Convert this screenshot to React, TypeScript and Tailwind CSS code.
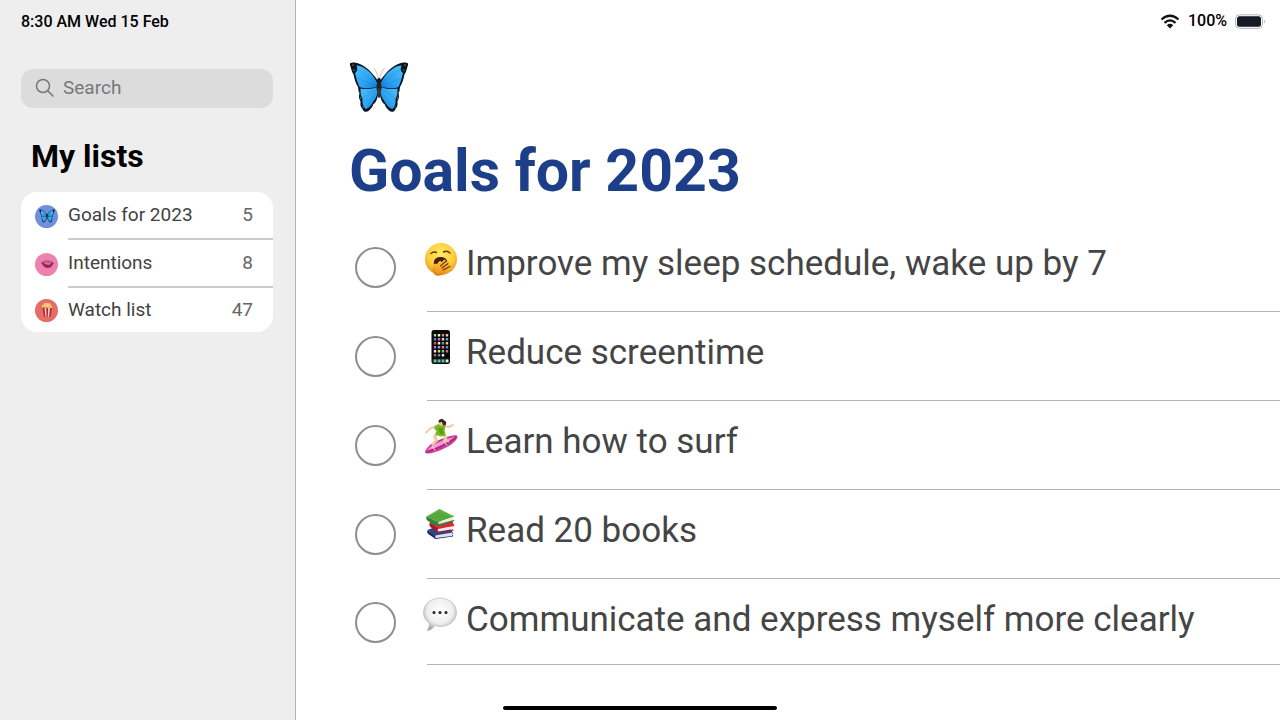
import React, { useState } from 'react';

interface Goal {
  id: string;
  text: string;
  icon: React.ReactNode;
}

interface ListItem {
  name: string;
  count: number;
  color: string;
  icon: React.ReactNode;
}

function Butterfly({ className, id }: { className: string; id: string }) {
  const wing = (
    <>
      <path
        d="M1 4C0 1.500 3.500 1 6.500 1.800C13 3 20 8 24 13.500C27 16.500 28.500 19 29.500 22L29.500 32C28.500 37 27 42 24.500 43C23.500 46.500 21 48.500 19.500 50C17.500 51.500 14.500 51 13.500 48C11 45.500 11.500 43 11.500 40C9.500 37.500 10 34 10.500 32C9 30 9.500 28 9 26C6.500 22 5.500 18 4.500 13.500C2.500 10.500 2 7 1 4Z"
        fill="#071521"
      />
      <path
        d="M7.500 4.500C14 5 20 9.500 24 15C26.500 18.500 28.500 22 29 25.500C22 27.500 15 28 10.500 26C8 20.500 7 16 6 12C8 10.500 9 9 7.500 4.500Z"
        fill={`url(#${id})`}
      />
      <path
        d="M11.500 27.500C18 29 24 27.500 29 26C29 32 27.500 37 24 41C22.500 44.500 19 47.500 16.500 48C14 45 13 42 13.500 38C11.500 35 11.500 31 11.500 27.500Z"
        fill={`url(#${id})`}
      />
      <g stroke="#075b9b" strokeWidth=".4" opacity=".4" fill="none">
        <path d="M28 24C20 17 14 11 8 9M28 25C18 22 14 19 7 17M28 27C22 31 18 34 14 37M28 28C25 35 21 40 18 45" />
      </g>
      <g fill="#d5eefb">
        <circle cx="4" cy="4" r=".6" />
        <circle cx="5" cy="9" r=".5" />
        <circle cx="14" cy="46" r=".5" />
        <circle cx="11.500" cy="37" r=".5" />
      </g>
    </>
  );
  return (
    <svg viewBox="0 0 60 52" className={className} aria-hidden="true">
      <defs>
        <linearGradient id={id} x1="0" y1="0" x2="1" y2="1">
          <stop offset="0" stopColor="#4dc0fa" />
          <stop offset=".6" stopColor="#2ca2f1" />
          <stop offset="1" stopColor="#0b7cdc" />
        </linearGradient>
      </defs>
      {wing}
      <g transform="matrix(-1 0 0 1 60 0)">{wing}</g>
      <path d="M29.500 18C28.500 13 27 10 25 7.500M30.500 18C31.500 13 33 10 35.500 7" fill="none" stroke="#b0a09c" strokeWidth=".7" />
      <ellipse cx="30" cy="20" rx="2" ry="3" fill="#17151a" />
      <ellipse cx="30" cy="26" rx="2.500" ry="6" fill="#271f22" />
      <ellipse cx="30" cy="32" rx="1.500" ry="5" fill="#49352c" />
    </svg>
  );
}

function Yawn() {
  return (
    <svg viewBox="0 0 36 36" className="size-9" aria-hidden="true">
      <defs>
        <radialGradient id="face" cx=".5" cy=".35" r=".65">
          <stop offset="0" stopColor="#ffeb64" />
          <stop offset=".65" stopColor="#fdcd38" />
          <stop offset="1" stopColor="#e79520" />
        </radialGradient>
        <linearGradient id="hand" x1="0" y1="0" x2="0" y2="1">
          <stop offset="0" stopColor="#ffcb3b" />
          <stop offset="1" stopColor="#e98718" />
        </linearGradient>
      </defs>
      <circle cx="18" cy="18" r="16" fill="url(#face)" />
      <path d="M8 12.500Q10.500 10 13.500 11.500M20.500 11Q24 9 27 12" fill="none" stroke="#603812" strokeWidth="1.500" strokeLinecap="round" />
      <path d="M11 24C10 18.500 13 16 18 16C23 16 26 20 25 27L14 29Z" fill="#45200e" />
      <path d="M9.500 27C9 23.500 11 22 14 23L16 20.500C17.500 19 18.500 20 18 21.500L21.500 18.500L23 19.500L21.500 21.500L25 20L26.500 21.500L24 24L27.500 23.500L28 25L24.500 28C23 32.500 18 35.500 13 34.500C10.500 33.500 9 30.500 9.500 27Z" fill="url(#hand)" />
      <path d="M17.500 25L22.500 20.500M19 27L25 22.500M20 29L27 25.500" fill="none" stroke="#74370d" strokeWidth="1.100" strokeLinecap="round" />
      <path d="M10.500 28C10.500 32 14 34.500 18 33.500" fill="none" stroke="#dc7518" strokeWidth="1" />
    </svg>
  );
}

const appColors = [
  ['#a3dbb1', '#f0f3f4', '#f18c55', '#f3c4cb'],
  ['#4c8ed8', '#e26abf', '#d9e4a0', '#3fb6d6'],
  ['#e2574b', '#f5ece1', '#ba63d8', '#f1ce61'],
  ['#c968dd', '#54c1e3', '#e98240', '#598de8'],
  ['#ececec', '#f2d451', '#79c9a2', '#e4599b'],
  ['#ba7849', '#7c7ee0', '#f3f3f3', '#000000'],
];

function Phone() {
  return (
    <svg viewBox="0 0 36 36" className="size-9" aria-hidden="true">
      <rect x="8.500" y="0" width="18.500" height="34" rx="2.500" fill="#090a0c" />
      {appColors.map((row, y) =>
        row.map((color, x) => (
          <rect key={`${y}-${x}`} x={10.8 + x * 4} y={4 + y * 4} width="2.400" height="2.400" rx=".5" fill={color} />
        ))
      )}
      <rect x="9.500" y="28.800" width="16.500" height="4.200" rx="1" fill="#29343a" />
      {['#55d474', '#4fc6bb', '#4ed267', '#eaf2f1'].map((color, x) => (
        <rect key={color} x={10.8 + x * 4} y="29.600" width="2.600" height="2.600" rx=".5" fill={color} />
      ))}
    </svg>
  );
}

function Surfer() {
  return (
    <svg viewBox="0 0 36 36" className="size-9" aria-hidden="true">
      <path d="M2 33.500C3 28 9 24 16 21C23 18 33 15 34.500 17C34.500 22 27 27 19 30.500C12 33.500 4 36 2 33.500Z" fill="#cf3a97" />
      <path d="M4 31.500C8 26 17 22 32 17.500C27 22 14 29 4 31.500Z" fill="#ef9fd2" />
      <path d="M3 33C13 30 25 25 33.500 18" fill="none" stroke="#a9237c" strokeWidth="1.200" />
      <path d="M9 26.500L12 31.500M20 20.500L24 26.500" stroke="#fbe3f2" strokeWidth="1" />
      <path d="M14.500 15L11.500 17.500L13.500 21.500L10 25M20 15.500L23 18L22 21L25 22" fill="none" stroke="#efc6a5" strokeWidth="2.800" strokeLinecap="round" strokeLinejoin="round" />
      <path d="M14 7L8 9L3 13.500M22 7L26 8L30 6" fill="none" stroke="#f1caab" strokeWidth="2" strokeLinecap="round" strokeLinejoin="round" />
      <path d="M12.500 6.500L17 4.500L22.500 7L21.500 12L23 16.500L18 17.500L12 15.500L13.500 12L11 9.500Z" fill="#79b91f" />
      <path d="M15 9L17 15L21 15.500L20 9" fill="#5f9c18" />
      <ellipse cx="18" cy="4" rx="2.300" ry="2.800" fill="#efc4a2" />
      <path d="M15.500 3.500C15 0 19.500 -1 21 1.500C24 2 23.500 6 22 6.500C20 7 19.500 5 19 3Z" fill="#352322" />
    </svg>
  );
}

function Books() {
  return (
    <svg viewBox="0 0 36 36" className="size-9" aria-hidden="true">
      <path d="M4.500 22L13 29L30.500 26L28 21L12 19Z" fill="#31438a" />
      <path d="M4.500 22Q3.500 25 6 26.500L12.500 31L30 28.500V27L13.500 29Z" fill="#1c2a66" />
      <path d="M12.500 27.500L29.500 24.500L29 28L13 30Q11.500 29 12.500 27.500Z" fill="#dfe2ec" />
      <path d="M7 14L14.500 21L31.500 18.500L29 12Z" fill="#d32a35" />
      <path d="M7 14Q5.500 17 7.500 19L14.500 25L31 22.500L30 21.500L15.500 23.500L14 20Z" fill="#aa182b" />
      <path d="M15 21L31 18L30.500 21L15.500 23.500Q14 22.500 15 21Z" fill="#f5edec" />
      <path d="M3.500 8.500L16.500 1L31.500 8.500L15 14Z" fill="#55a93a" />
      <path d="M3.500 8.500Q2.500 11 5 13L14.500 18.500L31.500 13L30.500 11.800L16 16Q13.500 15.500 15 14Z" fill="#2f862e" />
      <path d="M15.500 14L31 9L30.500 12L16 16Q14.500 15.500 15.500 14Z" fill="#eeeee6" />
      <path d="M5.500 8.500L16.500 2.200L29 8.500" fill="none" stroke="#70bd54" strokeWidth=".7" />
    </svg>
  );
}

function Speech() {
  return (
    <svg viewBox="0 0 36 36" className="size-9" aria-hidden="true">
      <defs>
        <radialGradient id="bubble" cx=".5" cy=".4" r=".6">
          <stop offset="0" stopColor="#ffffff" />
          <stop offset=".65" stopColor="#eeeeee" />
          <stop offset="1" stopColor="#a8a8a8" />
        </radialGradient>
      </defs>
      <path d="M17 1C26 1 33.500 7 33.500 15.500C33.500 24 26 29.500 17 29.500C15 29.500 13.500 29 12 28.500C10 31.500 7 33.500 4 33.500C6 31 6.500 28.500 6 26C2.500 23.500 .5 20 .5 15.500C.5 7 8 1 17 1Z" fill="url(#bubble)" stroke="#b5b5b5" strokeWidth=".6" />
      <circle cx="11" cy="15.500" r="1.500" fill="#222" />
      <circle cx="17" cy="15.500" r="1.500" fill="#222" />
      <circle cx="23" cy="15.500" r="1.500" fill="#222" />
    </svg>
  );
}

function Lips() {
  return (
    <svg viewBox="0 0 18 12" className="w-4" aria-hidden="true">
      <path d="M2.500 4C5 2 7 1.500 9 2C12 1 14.500 2.500 16.500 4.500C15.500 8.500 13 10.500 10 10.500C6.500 10.500 4 8 2.500 4Z" fill="#c8386d" />
      <path d="M2.500 4C6 5 12 5.500 16.500 4.500C15 7 12 8 9 7.800C6 7.500 4 6 2.500 4Z" fill="#76213f" />
      <path d="M5.500 4.900L14 5.200L12.500 6.200H8Z" fill="#e8bdca" />
      <path d="M6 8Q10 10 14 7.500" fill="none" stroke="#a01f50" strokeWidth="1.200" />
      <path d="M4.500 3.700Q9 2.500 14 3.700" fill="none" stroke="#e881aa" strokeWidth=".8" />
    </svg>
  );
}

function Popcorn() {
  return (
    <svg viewBox="0 0 16 18" className="w-4" aria-hidden="true">
      <path d="M3 6.500C2 5 3.500 4 4.500 4C4.500 1.500 8 1 9 2.500C11 1.500 12 3.500 11.500 4.500C13.500 4.500 13.500 6.500 13 7.500Z" fill="#f7cf78" />
      <path d="M3.500 6.500L13 7L11.500 16H5Z" fill="#b52835" />
      <path d="M5.500 7L6.500 16H7.500L7.200 7ZM9.200 7L8.800 16H10L11 7Z" fill="#f5d2c5" />
      <path d="M5 5Q7 3.500 8 5.500M9 4Q11 4 11 6" fill="none" stroke="#e9ac4c" strokeWidth=".7" />
    </svg>
  );
}

const lists: ListItem[] = [
  { name: 'Goals for 2023', count: 5, color: 'bg-[#7090dc]', icon: <Butterfly className="w-4" id="wingSmall" /> },
  { name: 'Intentions', count: 8, color: 'bg-[#ec82b2]', icon: <Lips /> },
  { name: 'Watch list', count: 47, color: 'bg-[#e46d68]', icon: <Popcorn /> },
];

const goals: Goal[] = [
  { id: 'sleep', text: 'Improve my sleep schedule, wake up by 7', icon: <Yawn /> },
  { id: 'screentime', text: 'Reduce screentime', icon: <Phone /> },
  { id: 'surf', text: 'Learn how to surf', icon: <Surfer /> },
  { id: 'books', text: 'Read 20 books', icon: <Books /> },
  { id: 'communicate', text: 'Communicate and express myself more clearly', icon: <Speech /> },
];

function Sidebar() {
  return (
    <aside className="w-[296px] shrink-0 bg-[#eeeeee] border-r border-[#b4b4b4] pl-[21px] pr-[22px]">
      <div className="h-[69px] pt-[10px] text-base leading-6 font-medium text-black">8:30 AM Wed 15 Feb</div>

      <label className="flex items-center gap-2 h-[39px] rounded-xl bg-[#dcdcdc] px-[14px] pb-[2px]">
        <svg viewBox="0 0 20 20" className="size-5 shrink-0" fill="none" stroke="#77777a" strokeWidth="1.500" strokeLinecap="round" aria-hidden="true">
          <circle cx="8" cy="8" r="6.500" />
          <path d="M13 13L18 18" />
        </svg>
        <input type="search" aria-label="Search" placeholder="Search" className="w-full min-w-0 bg-transparent text-[19px] leading-6 text-[#444444] placeholder:text-[#77777a] outline-none" />
      </label>

      <h2 className="mt-7 mb-4 pl-[10px] text-[32px] leading-10 font-bold text-black">My lists</h2>

      <nav className="rounded-2xl bg-white overflow-hidden">
        {lists.map((list, i) => (
          <a key={list.name} href="#" className="flex items-center h-12 last:h-11 pl-[14px]">
            <span className={`flex items-center justify-center size-[23px] shrink-0 rounded-full ${list.color}`}>{list.icon}</span>
            <span className={`flex flex-1 items-center justify-between h-full ml-[10px] pr-5 text-[19px] leading-6 text-[#424242] ${i < lists.length - 1 ? 'border-b-2 border-[#cccccc]' : ''}`}>
              {list.name}
              <span className="text-[#666666]">{list.count}</span>
            </span>
          </a>
        ))}
      </nav>
    </aside>
  );
}

export default function App() {
  const [done, setDone] = useState<string[]>([]);

  const toggle = (id: string) => {
    setDone((prev) => (prev.includes(id) ? prev.filter((d) => d !== id) : [...prev, id]));
  };

  return (
    <div className="relative flex min-h-screen bg-white font-['Roboto',sans-serif]">
      <Sidebar />

      <main className="flex-1 min-w-0">
        {/* Status bar */}
        <div className="flex items-center justify-end gap-2 h-10 pt-[2px] pr-[14px] text-base font-medium text-black">
          <svg viewBox="0 0 20 15" className="w-5" aria-hidden="true">
            <path d="M1.500 5.500Q10 -2 18.500 5.500M4.500 8.800Q10 4 15.500 8.800" fill="none" stroke="#111" strokeWidth="2.200" />
            <path d="M6.800 11.200Q10 8.500 13.200 11.200L10 14.500Z" fill="#111" />
          </svg>
          <span>100%</span>
          <svg viewBox="0 0 31 15" className="w-[31px]" aria-hidden="true">
            <rect x=".5" y=".8" width="27" height="13.500" rx="4" fill="white" stroke="#b5b5bc" />
            <rect x="2" y="2.300" width="24" height="10.500" rx="2.500" fill="#151a24" />
            <path d="M29 5.500Q31 7.500 29 9.500Z" fill="#b5b5bc" />
          </svg>
        </div>

        <div className="pl-[53px] pt-[21px]">
          <Butterfly className="w-[60px]" id="wingLarge" />
          <h1 className="mt-[22px] mb-4 text-[59px] leading-[72px] font-bold text-[#1d3e88]">Goals for 2023</h1>
        </div>

        <ul className="pl-[59px]">
          {goals.map((goal) => (
            <li key={goal.id} className="flex items-center h-[89px] last:h-[86px]">
              <input
                type="checkbox"
                id={goal.id}
                checked={done.includes(goal.id)}
                onChange={() => toggle(goal.id)}
                className="appearance-none size-[41px] shrink-0 rounded-full border-2 border-[#8e8e8e] bg-white checked:bg-[#1d3e88]"
              />
              <label htmlFor={goal.id} className="flex flex-1 h-full ml-[31px] border-b border-[#b4b4b4] text-[35px] leading-10 text-[#454545]">
                <span className="-ml-1 mt-[18px] shrink-0">{goal.icon}</span>
                <span className="ml-[7px] mt-[21px]">{goal.text}</span>
              </label>
            </li>
          ))}
        </ul>
      </main>

      {/* Home indicator */}
      <div className="absolute bottom-[10px] left-1/2 -translate-x-1/2 w-[274px] h-1 rounded-full bg-black" />
    </div>
  );
}
